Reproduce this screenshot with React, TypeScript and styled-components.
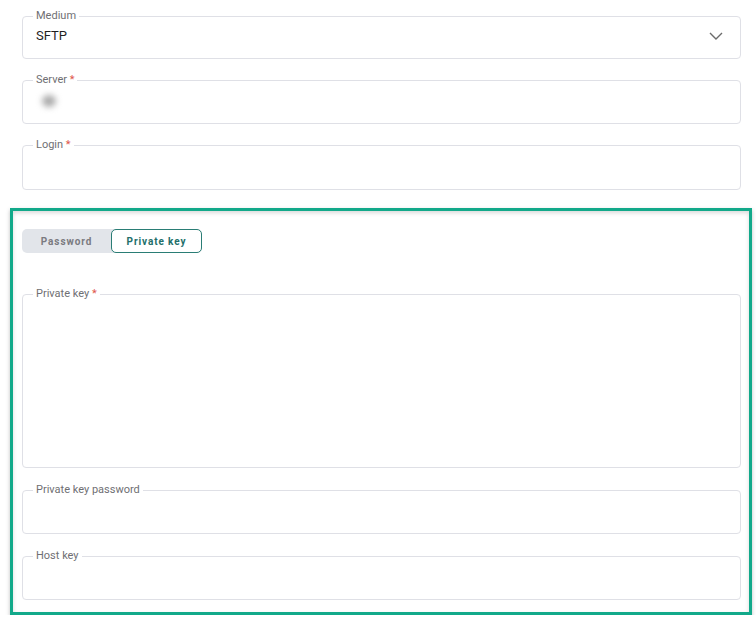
import { FC } from 'react';
import styled, { createGlobalStyle } from 'styled-components';

const GlobalStyle = createGlobalStyle`
  body {
    margin: 0;
    background: #ffffff;
    font-family: 'Roboto', 'Liberation Sans', sans-serif;
  }
`;

interface FieldProps {
  label: string;
  required?: boolean;
  height: number; // visual height, border to border
  children?: React.ReactNode;
}

const Field: FC<FieldProps> = ({ label, required, height, children }) => {
  return (
    <FieldBox $height={height}>
      <Legend>
        {label}
        {required && <Star> *</Star>}
      </Legend>
      <FieldBody $height={height}>{children}</FieldBody>
    </FieldBox>
  );
};

const App: FC = () => {
  return (
    <Page>
      <GlobalStyle />
      <Field label="Medium" height={43}>
        <Value>SFTP</Value>
        <Chevron width="14" height="8" viewBox="0 0 14 8">
          <path d="M1 1 L7 7 L13 1" fill="none" stroke="#6b6b6b" strokeWidth="1.4" />
        </Chevron>
      </Field>
      <Field label="Server" required height={44}>
        <Blurred />
      </Field>
      <Field label="Login" required height={45} />

      <Section>
        <Toggle>
          <ToggleButton>Password</ToggleButton>
          <ToggleButton $active>Private key</ToggleButton>
        </Toggle>
        <SectionFields>
          <Field label="Private key" required height={174} />
          <Field label="Private key password" height={44} />
          <Field label="Host key" height={44} />
        </SectionFields>
      </Section>
    </Page>
  );
};

export default App;

const Page = styled.div`
  width: 719px;
  padding: 9px 0 0 22px;
  display: flex;
  flex-direction: column;
  gap: 14px;
`;

const FieldBox = styled.fieldset<{ $height: number }>`
  margin: 0;
  padding: 0 12px 0 10px;
  border: 1px solid #dfe0e6;
  border-radius: 4px;
  box-sizing: border-box;
  height: ${(p) => p.$height + 7}px;
  min-width: 0;
`;

const Legend = styled.legend`
  padding: 0 3px;
  font-size: 11px;
  line-height: 14px;
  color: #6f6f73;
`;

const Star = styled.span`
  color: #e0564a;
`;

const FieldBody = styled.div<{ $height: number }>`
  height: ${(p) => p.$height - 8}px;
  margin-top: -5px;
  display: flex;
  align-items: center;
  justify-content: space-between;
  padding: 0 3px;
`;

const Value = styled.div`
  font-size: 13px;
  color: #1f1f1f;
`;

const Chevron = styled.svg`
  margin-right: 2px;
  margin-top: 1px;
`;

const Blurred = styled.div`
  width: 14px;
  height: 12px;
  margin-left: 6px;
  margin-top: 2px;
  border-radius: 50%;
  background: #a9a9a9;
  filter: blur(3px);
`;

const Section = styled.div`
  margin: 4px 0 0 -12px;
  width: 742px;
  box-sizing: border-box;
  border: 3px solid #12a98a;
  padding: 18px 8px 12px 9px;
  box-shadow: 0 2px 4px rgba(0, 0, 0, 0.25), inset 0 2px 4px rgba(0, 0, 0, 0.15);
`;

const Toggle = styled.div`
  display: flex;
  width: 180px;
  height: 24px;
  background: #e2e5ea;
  border-radius: 5px;
`;

const ToggleButton = styled.div<{ $active?: boolean }>`
  flex: 1;
  display: flex;
  align-items: center;
  justify-content: center;
  font-size: 10px;
  font-weight: 700;
  letter-spacing: 0.9px;
  box-sizing: border-box;
  border-radius: 5px;
  color: ${(p) => (p.$active ? '#236f6a' : '#7a7a80')};
  background: ${(p) => (p.$active ? '#ffffff' : 'transparent')};
  border: ${(p) => (p.$active ? '1px solid #2a7d75' : 'none')};
`;

const SectionFields = styled.div`
  margin-top: 34px;
  display: flex;
  flex-direction: column;
  gap: 15px;
`;
